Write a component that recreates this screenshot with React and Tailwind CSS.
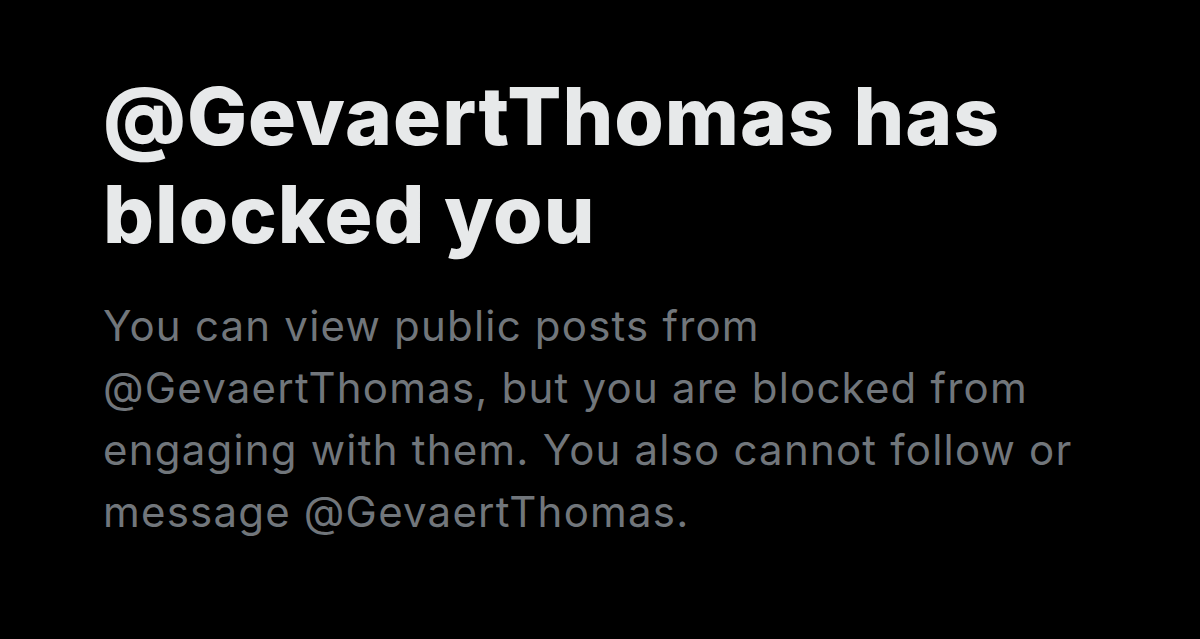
export default function App() {
  return (
    <div className="w-[1200px] h-[639px] bg-black overflow-hidden">
      <div className="pl-[103px] pt-[67px]">
        <h1 className="text-[#e7e9ea] text-[80px] font-extrabold leading-[98px] tracking-[1px] font-['Inter',Arial,sans-serif]">
          <span className="block whitespace-nowrap">@GevaertThomas has</span>
          <span className="block whitespace-nowrap">blocked you</span>
        </h1>
        <p className="mt-[32px] text-[#71767b] text-[42px] leading-[62px] tracking-[1.2px] font-['Inter',sans-serif]">
          <span className="block whitespace-nowrap">You can view public posts from</span>
          <span className="block whitespace-nowrap">@GevaertThomas, but you are blocked from</span>
          <span className="block whitespace-nowrap">engaging with them. You also cannot follow or</span>
          <span className="block whitespace-nowrap">message @GevaertThomas.</span>
        </p>
      </div>
    </div>
  );
}
